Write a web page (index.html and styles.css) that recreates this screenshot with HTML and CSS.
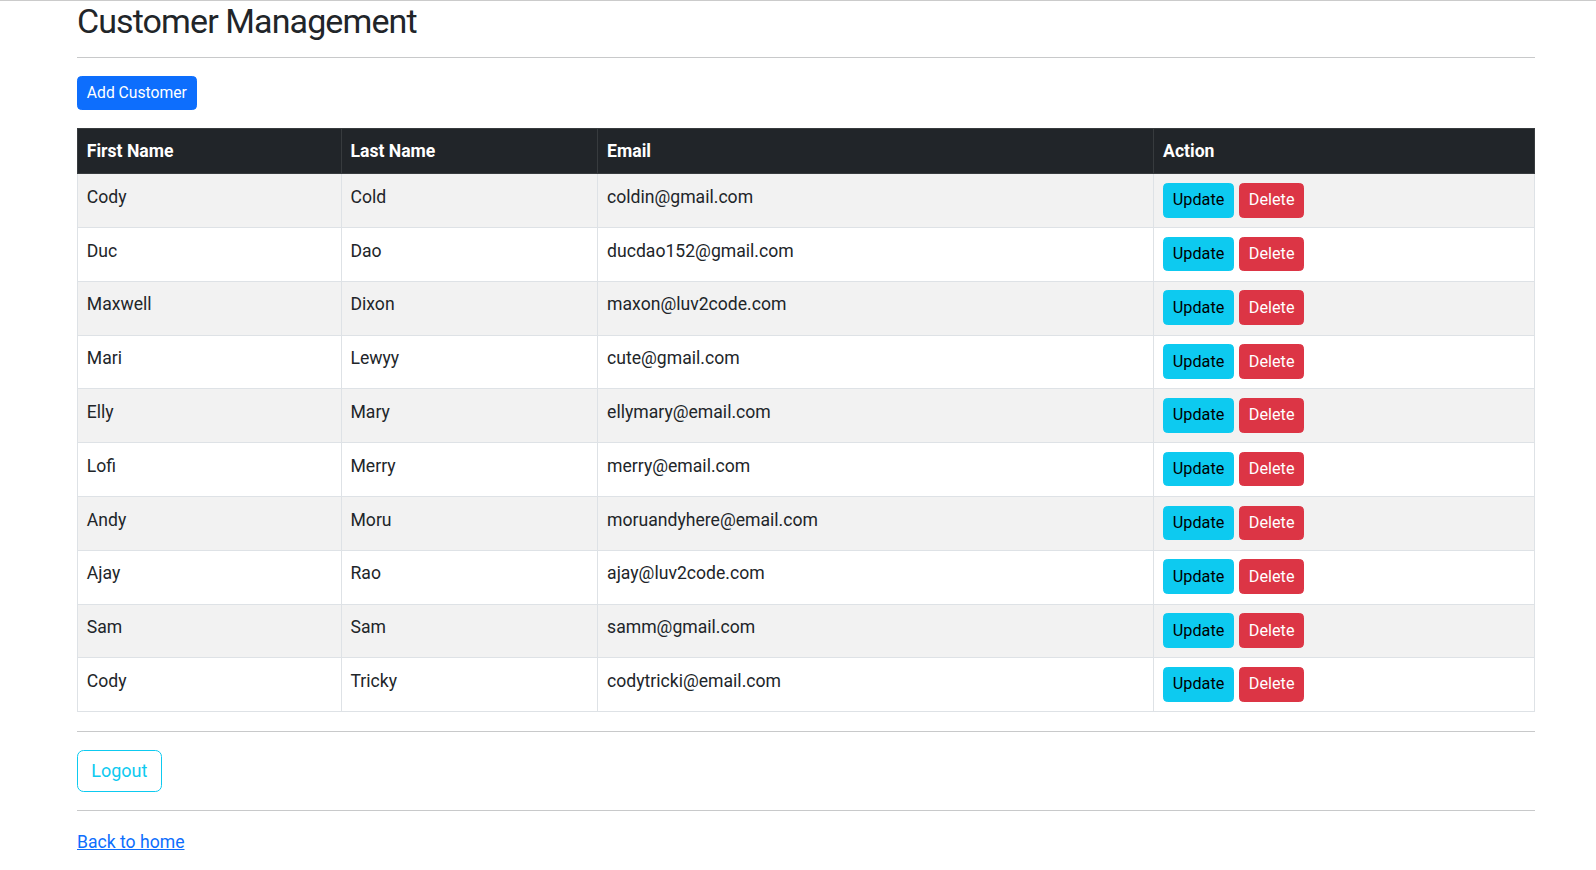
FILE: index.html
```html
<!DOCTYPE html>
<html lang="en">
<head>
<meta charset="utf-8">
<title>Customer Management</title>
<link rel="stylesheet" href="styles.css">
</head>
<body>
<div class="page">
  <div class="container">
    <h2 class="title">Customer Management</h2>
    <hr class="rule rule-top">
    <div class="toolbar">
      <a class="btn btn-sm btn-primary btn-add" href="#">Add Customer</a>
    </div>
    <table class="table">
      <thead>
        <tr>
          <th class="col-first">First Name</th>
          <th class="col-last">Last Name</th>
          <th class="col-email">Email</th>
          <th class="col-action">Action</th>
        </tr>
      </thead>
      <tbody>
        <tr><td>Cody</td><td>Cold</td><td>coldin@gmail.com</td><td class="actions"><div class="btns"><a class="btn btn-sm btn-info" href="#">Update</a><a class="btn btn-sm btn-danger" href="#">Delete</a></div></td></tr>
        <tr><td>Duc</td><td>Dao</td><td>ducdao152@gmail.com</td><td class="actions"><div class="btns"><a class="btn btn-sm btn-info" href="#">Update</a><a class="btn btn-sm btn-danger" href="#">Delete</a></div></td></tr>
        <tr><td>Maxwell</td><td>Dixon</td><td>maxon@luv2code.com</td><td class="actions"><div class="btns"><a class="btn btn-sm btn-info" href="#">Update</a><a class="btn btn-sm btn-danger" href="#">Delete</a></div></td></tr>
        <tr><td>Mari</td><td>Lewyy</td><td>cute@gmail.com</td><td class="actions"><div class="btns"><a class="btn btn-sm btn-info" href="#">Update</a><a class="btn btn-sm btn-danger" href="#">Delete</a></div></td></tr>
        <tr><td>Elly</td><td>Mary</td><td>ellymary@email.com</td><td class="actions"><div class="btns"><a class="btn btn-sm btn-info" href="#">Update</a><a class="btn btn-sm btn-danger" href="#">Delete</a></div></td></tr>
        <tr><td>Lofi</td><td>Merry</td><td>merry@email.com</td><td class="actions"><div class="btns"><a class="btn btn-sm btn-info" href="#">Update</a><a class="btn btn-sm btn-danger" href="#">Delete</a></div></td></tr>
        <tr><td>Andy</td><td>Moru</td><td>moruandyhere@email.com</td><td class="actions"><div class="btns"><a class="btn btn-sm btn-info" href="#">Update</a><a class="btn btn-sm btn-danger" href="#">Delete</a></div></td></tr>
        <tr><td>Ajay</td><td>Rao</td><td>ajay@luv2code.com</td><td class="actions"><div class="btns"><a class="btn btn-sm btn-info" href="#">Update</a><a class="btn btn-sm btn-danger" href="#">Delete</a></div></td></tr>
        <tr><td>Sam</td><td>Sam</td><td>samm@gmail.com</td><td class="actions"><div class="btns"><a class="btn btn-sm btn-info" href="#">Update</a><a class="btn btn-sm btn-danger" href="#">Delete</a></div></td></tr>
        <tr><td>Cody</td><td>Tricky</td><td>codytricki@email.com</td><td class="actions"><div class="btns"><a class="btn btn-sm btn-info" href="#">Update</a><a class="btn btn-sm btn-danger" href="#">Delete</a></div></td></tr>
      </tbody>
    </table>
    <hr class="rule rule-mid">
    <div class="toolbar">
      <a class="btn btn-outline-info" href="#">Logout</a>
    </div>
    <hr class="rule rule-bottom">
    <a class="home-link" href="#">Back to home</a>
  </div>
</div>
</body>
</html>
```

FILE: styles.css
```css
html, body {
  margin: 0;
  padding: 0;
}

body {
  font-family: Roboto, "Liberation Sans", sans-serif;
  font-size: 17.6px;
  line-height: 1.5;
  color: #212529;
  background: #fff;
}

.page {
  border-top: 1px solid #cbcbcb;
  min-height: 869px;
}

.container {
  margin: 0 61px 0 77px;
}

.title {
  font-size: 34px;
  font-weight: 400;
  line-height: 42.24px;
  letter-spacing: -0.9px;
  margin: -1px 0 0;
}

.rule {
  border: 0;
  border-top: 1px solid #c8c9ca;
  height: 0;
  margin: 0;
}

.rule-top {
  margin-top: 14.8px;
  margin-bottom: 18px;
}

.rule-mid {
  margin-top: 19px;
  margin-bottom: 18.4px;
}

.rule-bottom {
  margin-top: 18.4px;
  margin-bottom: 17.6px;
}

.toolbar {
  display: flex;
  margin-bottom: 17.6px;
}

.rule-mid + .toolbar {
  margin-bottom: 0;
}

.btn {
  display: inline-block;
  box-sizing: border-box;
  text-decoration: none;
  border: 1px solid transparent;
  font-size: 18px;
  line-height: 26.4px;
  padding: 6.6px 13.2px;
  border-radius: 6.6px;
  font-weight: 400;
  text-align: center;
  white-space: nowrap;
}

.btn-sm {
  font-size: 16.2px;
  line-height: 23.9px;
  padding: 4.4px 8.8px;
  border-radius: 4.4px;
}

.btn-add {
  font-size: 15.7px;
  line-height: 23.1px;
}

.btn-primary {
  background: #0d6efd;
  border-color: #0d6efd;
  color: #fff;
}

.btn-info {
  background: #0dcaf0;
  border-color: #0dcaf0;
  color: #000;
}

.btn-danger {
  background: #dc3545;
  border-color: #dc3545;
  color: #fff;
}

.btn-outline-info {
  background: transparent;
  border-color: #0dcaf0;
  color: #0dcaf0;
}

.table {
  width: 100%;
  border-collapse: collapse;
  table-layout: fixed;
  margin: 0;
}

.table th,
.table td {
  border: 1px solid #dee2e6;
  padding: 9.6px 8.8px 8px;
  vertical-align: top;
  text-align: left;
}

.table thead th {
  background: #212529;
  color: #fff;
  font-weight: 700;
  border-color: #373b3e;
  padding-top: 9.8px;
  padding-bottom: 8.6px;
}

.table tbody tr:nth-child(odd) td {
  background: #f2f2f2;
}

.col-first { width: 245.1px; }
.col-last { width: 238px; }
.col-email { width: 537.4px; }
.col-action { width: auto; }

.table td.actions {
  padding-top: 8.6px;
  padding-bottom: 9.5px;
}

.btns {
  display: flex;
  gap: 5px;
}

.home-link {
  color: #0d6efd;
  text-decoration: underline;
}
```
